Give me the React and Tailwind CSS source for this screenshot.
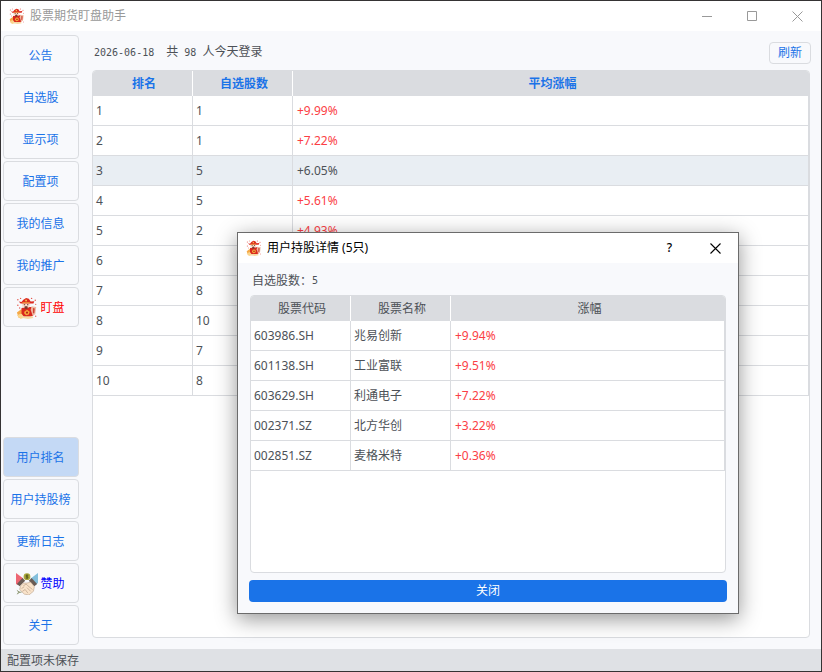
import React from 'react';
import clsx from 'clsx';

const topMenu = ['公告', '自选股', '显示项', '配置项', '我的信息', '我的推广'];

const ranking = [
  ['1', '1', '+9.99%'],
  ['2', '1', '+7.22%'],
  ['3', '5', '+6.05%'],
  ['4', '5', '+5.61%'],
  ['5', '2', '+4.93%'],
  ['6', '5', ''],
  ['7', '8', ''],
  ['8', '10', ''],
  ['9', '7', ''],
  ['10', '8', ''],
];

const holdings = [
  ['603986.SH', '兆易创新', '+9.94%'],
  ['601138.SH', '工业富联', '+9.51%'],
  ['603629.SH', '利通电子', '+7.22%'],
  ['002371.SZ', '北方华创', '+3.22%'],
  ['002851.SZ', '麦格米特', '+0.36%'],
];

// God of wealth mascot
const WealthIcon = ({ className }) => (
  <svg viewBox="0 0 24 24" className={className} aria-hidden="true">
    <path d="M1 17l5-4 3 9-6 1z" fill="#f5a947" />
    <path d="M1 20l5-2 4 4-5 2z" fill="#fbd58d" />
    <path d="M6 12l6-1 6 0 3 3-2 6-4 2H9l-3-4z" fill="#d9281e" />
    <path d="M17 10l5 1-1 8-3 1-2-6z" fill="#efb9a2" />
    <path d="M18.500 12l2 .5-.5 5-1.500.5z" fill="#cf4436" />
    <ellipse cx="11" cy="8.500" rx="4.600" ry="3.500" fill="#fae0d0" />
    <path d="M8.500 8h1.500v1H8.500zM12 8h1.500v1H12z" fill="#5b3028" />
    <path d="M9 10.500l2-.6 2 .6-.8 2.500h-2.400z" fill="#7a3a2e" />
    <path d="M3 5l3 .5 2-2.500 3-2 3 1 2 3 4-.5-1 2.500H5z" fill="#dc2a20" />
    <path d="M7 5.800h8v1H7z" fill="#f4b13e" />
    <circle cx="11" cy="3.800" r="1" fill="#f8c84f" />
    <path d="M9 16l3-2 3 2-1 3-3 1-2-2z" fill="#f6a63b" />
    <path d="M11 16h2v2h-2z" fill="#b11c12" />
    <path d="M6 21h12l1 2-6 1-6-1z" fill="#f6d9a4" />
    <g fill="#e4574d">
      <circle cx="2" cy="3" r=".8" />
      <circle cx="5" cy="1.500" r=".7" />
      <circle cx="17" cy="1.500" r=".8" />
      <circle cx="21" cy="3.500" r=".8" />
      <circle cx="2" cy="9" r=".8" />
      <circle cx="4" cy="12" r=".7" />
      <circle cx="21.500" cy="8" r=".7" />
      <circle cx="21.500" cy="21" r=".7" />
    </g>
  </svg>
);

const HandshakeIcon = ({ className }) => (
  <svg viewBox="0 0 24 24" className={className} aria-hidden="true">
    <path d="M0 0l8 6-6 7-2-1z" fill="#ed6673" />
    <path d="M24 0l-8 6 5 7 3-2z" fill="#83bfdc" />
    <path d="M7 5.500l3 3-6 6-3-2.500z" fill="#695b54" />
    <path d="M17 5.500l-3 3 6 6 3-2.500z" fill="#695b54" />
    <circle cx="12" cy="4" r="3.700" fill="#aaa83b" />
    <path d="M13.500 2.500h-2.500v1.500h2v1.500h-2.500M12 1.500v5" stroke="#4e501d" strokeWidth=".8" fill="none" />
    <path d="M8 11l4 0 4-1 4 5-1 5-5 4-5-1-5-5 1-4z" fill="#f9e3ca" stroke="#bfa68e" strokeWidth=".7" />
    <path d="M8 14l3-2 2 2 5 4M12 16l4 4M10 18l3 4M6 17l3-2M7 20l3-2" stroke="#b59b83" strokeWidth=".7" fill="none" />
    <path d="M1 19l3 2-3 2M2 21h4" stroke="#8b9570" strokeWidth="1" fill="none" />
  </svg>
);

const MenuButton = ({ children, active, className = 'text-[#1a73e8]' }) => (
  <button
    type="button"
    className={clsx(
      'flex h-10 w-full items-center justify-center gap-[2px] rounded border border-[#dadce0] pt-[2px] pr-px whitespace-nowrap',
      active && 'bg-[#c4d9f5]',
      className
    )}
  >
    {children}
  </button>
);

const DataTable = ({ label, headers, rows, selected, headClass }) => (
  <div className="min-h-0 flex-1 overflow-hidden rounded border border-[#dadce0] bg-white">
    <table aria-label={label} className="w-full table-fixed border-separate border-spacing-0 text-left">
      <colgroup>
        <col className="w-[100px]" />
        <col className="w-[100px]" />
        <col />
      </colgroup>
      <thead>
        <tr>
          {headers.map((head, i) => (
            <th
              key={head}
              scope="col"
              className={clsx('h-[25px] bg-[#dadce0] py-0 pr-0 pl-[3px] text-center', headClass, i < 2 && 'border-r border-white')}
            >
              {head}
            </th>
          ))}
        </tr>
      </thead>
      <tbody>
        {rows.map((row, r) => (
          <tr key={row[0]} className={clsx(r === selected && 'bg-[#e9eef3]')}>
            {row.map((cell, i) => (
              <td
                key={i}
                className={clsx(
                  'h-[30px] border-r border-b border-[#dadce0] py-0 pr-0',
                  i === 2 ? 'pl-1' : 'pl-[3px]',
                  i === 2 && r !== selected && 'text-[#fb3e45]'
                )}
              >
                {cell}
              </td>
            ))}
          </tr>
        ))}
      </tbody>
    </table>
  </div>
);

const HoldingsDialog = () => (
  <section
    role="dialog"
    aria-labelledby="dialog-title"
    className="absolute top-[231px] left-[236px] flex h-[382px] w-[502px] flex-col border border-[#6b6b6b] bg-[#f8f9fc] shadow-[0_5px_20px_rgba(0,0,0,0.42)]"
  >
    <header className="flex h-[30px] shrink-0 items-center bg-white pl-2 text-black">
      <WealthIcon className="mr-[5px] size-4" />
      <h2 id="dialog-title" className="flex-1">用户持股详情 (5只)</h2>
      <button type="button" aria-label="帮助" className="flex h-full w-[45px] items-center justify-center text-[12px] font-medium">?</button>
      <button type="button" aria-label="关闭窗口" className="flex h-full w-[46px] items-center justify-center">
        <svg viewBox="0 0 11 11" className="size-[11px]" stroke="currentColor" strokeWidth="1.100">
          <path d="M.5.5l10 10M10.500.5l-10 10" />
        </svg>
      </button>
    </header>
    <div className="flex min-h-0 flex-1 flex-col px-[11px] pb-[11px]">
      <p className="flex h-8 shrink-0 items-center px-[3px] pt-1">
        自选股数：<span className="font-['DejaVu_Sans_Mono',monospace] text-[10px]">5</span>
      </p>
      <div className="flex min-h-0 flex-1 flex-col px-px">
        <DataTable
          label="用户持股"
          headers={['股票代码', '股票名称', '涨幅']}
          rows={holdings}
          headClass="font-normal"
        />
      </div>
      <button type="button" className="mt-[7px] h-[22px] shrink-0 rounded bg-[#1a73e8] text-white">关闭</button>
    </div>
  </section>
);

const App = () => {
  return (
    <div className="relative flex h-screen flex-col overflow-hidden border border-[#353334] bg-[#f8f9fc] font-['Noto_Sans','Noto_Sans_CJK_SC',sans-serif] text-[12px] leading-4 text-[#4d5157]">
      {/* Title bar */}
      <header className="flex h-[30px] shrink-0 items-center bg-white pr-px pl-2 text-[#999999]">
        <WealthIcon className="mr-[5px] size-4" />
        <h1 className="flex-1">股票期货盯盘助手</h1>
        <button type="button" aria-label="最小化" className="flex h-full w-[45px] items-center justify-center">
          <svg viewBox="0 0 10 10" className="size-[10px]"><path d="M0 5h10v1H0z" fill="currentColor" /></svg>
        </button>
        <button type="button" aria-label="最大化" className="flex h-full w-[45px] items-center justify-center">
          <svg viewBox="0 0 10 10" className="size-[10px]" fill="none" stroke="currentColor"><path d="M.5.5h9v9h-9z" /></svg>
        </button>
        <button type="button" aria-label="关闭" className="flex h-full w-[46px] items-center justify-center">
          <svg viewBox="0 0 11 11" className="size-[11px]" stroke="currentColor"><path d="M.5.5l10 10M10.500.5l-10 10" /></svg>
        </button>
      </header>

      <div className="flex min-h-0 flex-1">
        {/* Sidebar */}
        <nav className="flex w-20 shrink-0 flex-col justify-between px-[2px] py-1">
          <div className="flex flex-col gap-[2px]">
            {topMenu.map((item) => (
              <MenuButton key={item}>{item}</MenuButton>
            ))}
            <MenuButton className="text-[#ff0000]">
              <WealthIcon className="size-[22px]" />
              盯盘
            </MenuButton>
          </div>
          <div className="flex flex-col gap-[2px]">
            <MenuButton active>用户排名</MenuButton>
            <MenuButton>用户持股榜</MenuButton>
            <MenuButton>更新日志</MenuButton>
            <MenuButton className="text-[#0000ff]">
              <HandshakeIcon className="size-[22px]" />
              赞助
            </MenuButton>
            <MenuButton>关于</MenuButton>
          </div>
        </nav>

        {/* Ranking */}
        <main className="flex min-w-0 flex-1 flex-col px-[11px] pb-[11px]">
          <div className="flex h-[39px] shrink-0 items-center justify-between pt-1">
            <p className="pl-[2px] font-['DejaVu_Sans_Mono','Noto_Sans_CJK_SC',monospace] text-[10px] whitespace-pre">
              2026-06-18{'  '}<span className="text-[12px]">共</span> 98 <span className="text-[12px]">人今天登录</span>
            </p>
            <button type="button" className="-mr-px h-[22px] w-[42px] rounded border border-[#dadce0] text-[#1a73e8]">刷新</button>
          </div>
          <DataTable
            label="用户排名"
            headers={['排名', '自选股数', '平均涨幅']}
            rows={ranking}
            selected={2}
            headClass="font-bold text-[#1a73e8]"
          />
        </main>
      </div>

      <footer className="flex h-[22px] shrink-0 items-center bg-[#dfe1e5] pt-[2px] pl-[6px]">配置项未保存</footer>

      <HoldingsDialog />
    </div>
  );
};

export default App;
